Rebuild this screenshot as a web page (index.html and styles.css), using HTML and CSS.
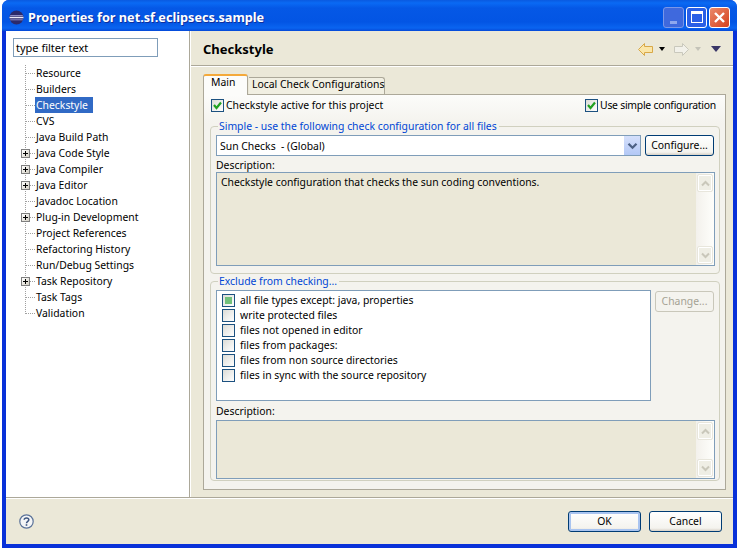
FILE: index.html
```html
<!DOCTYPE html>
<html>
	<head>
		<title>Properties for net.sf.eclipsecs.sample</title>
		<link rel="stylesheet" href="styles.css">
	</head>
	<body>
		<svg class="defs" width="0" height="0">
			<symbol id="check" viewBox="0 0 11 11"><path d="M2 5 L4.5 8 L9 2.5" fill="none" stroke="#21a121" stroke-width="2.2"/></symbol>
			<symbol id="up" viewBox="0 0 9 7"><path d="M1 5.5 L4.5 2 L8 5.5" fill="none" stroke="#c9c7ba" stroke-width="2"/></symbol>
			<symbol id="down" viewBox="0 0 9 7"><path d="M1 1.5 L4.5 5 L8 1.5" fill="none" stroke="#c9c7ba" stroke-width="2"/></symbol>
		</svg>
		<div class="window">
			<div class="titlebar">
				<svg class="app-icon" width="15" height="15" viewBox="0 0 15 15">
					<circle cx="7.5" cy="7.5" r="7" fill="#2c2a6b"/>
					<path d="M1.2 5.5 H13.8" stroke="#8f8dc4" stroke-width="1"/>
					<path d="M0.5 7.5 H14.5" stroke="#eceaf6" stroke-width="1.6"/>
					<path d="M1.2 9.8 H13.8" stroke="#8f8dc4" stroke-width="1"/>
				</svg>
				<span class="title-text">Properties for net.sf.eclipsecs.sample</span>
				<div class="win-btn min"><i></i></div>
				<div class="win-btn max"><i></i></div>
				<div class="win-btn close">
					<svg width="13" height="13" viewBox="0 0 13 13"><path d="M2 2 L11 11 M11 2 L2 11" stroke="#fff" stroke-width="2.4"/></svg>
				</div>
			</div>
			<div class="content">
				<div class="main">
					<div class="sidebar">
						<div class="filter">type filter text</div>
						<div class="tree">
							<div class="row">Resource</div>
							<div class="row">Builders</div>
							<div class="row"><span class="sel">Checkstyle</span></div>
							<div class="row">CVS</div>
							<div class="row">Java Build Path</div>
							<div class="row plus"><b></b>Java Code Style</div>
							<div class="row plus"><b></b>Java Compiler</div>
							<div class="row plus"><b></b>Java Editor</div>
							<div class="row">Javadoc Location</div>
							<div class="row plus"><b></b>Plug-in Development</div>
							<div class="row">Project References</div>
							<div class="row">Refactoring History</div>
							<div class="row">Run/Debug Settings</div>
							<div class="row plus"><b></b>Task Repository</div>
							<div class="row">Task Tags</div>
							<div class="row last">Validation</div>
						</div>
					</div>
					<div class="panel">
						<div class="panel-head">
							<h1>Checkstyle</h1>
							<div class="nav">
								<svg class="nav-arrow" width="15" height="13" viewBox="0 0 15 13"><path d="M0.5 6.5 L6.5 0.5 V3.5 H14.5 V9.5 H6.5 V12.5 Z" fill="#fbe6a8" stroke="#d8a848"/></svg>
								<i class="tri black"></i>
								<svg class="nav-arrow fwd" width="15" height="13" viewBox="0 0 15 13"><path d="M14.5 6.5 L8.5 0.5 V3.5 H0.5 V9.5 H8.5 V12.5 Z" fill="#f2f1ea" stroke="#c9c8bc"/></svg>
								<i class="tri grey"></i>
								<i class="tri big"></i>
							</div>
						</div>
						<div class="tabs">
							<div class="tab active">Main</div>
							<div class="tab">Local Check Configurations</div>
						</div>
						<div class="folder">
							<div class="top-row">
								<label class="cb"><span class="box"><svg width="11" height="11"><use href="#check"/></svg></span>Checkstyle active for this project</label>
								<label class="cb tight"><span class="box"><svg width="11" height="11"><use href="#check"/></svg></span>Use simple configuration</label>
							</div>
							<fieldset class="group simple">
								<legend>Simple - use the following check configuration for all files</legend>
								<div class="combo-row">
									<div class="combo">
										<span>Sun Checks &nbsp;- (Global)</span>
										<span class="combo-btn"><svg width="11" height="8" viewBox="0 0 9 7"><path d="M1 1.5 L4.5 5 L8 1.5" fill="none" stroke="#4d6185" stroke-width="2"/></svg></span>
									</div>
									<div class="btn configure">Configure...</div>
								</div>
								<div class="label">Description:</div>
								<div class="desc tall">
									<div class="desc-text">Checkstyle configuration that checks the sun coding conventions.</div>
									<div class="scroll">
										<span class="sb"><svg width="9" height="7"><use href="#up"/></svg></span>
										<span class="sb"><svg width="9" height="7"><use href="#down"/></svg></span>
									</div>
								</div>
							</fieldset>
							<fieldset class="group exclude">
								<legend>Exclude from checking...</legend>
								<div class="list-row">
									<div class="list">
										<div class="item"><span class="box"><i class="mixed"></i></span>all file types except: java, properties</div>
										<div class="item"><span class="box"></span>write protected files</div>
										<div class="item"><span class="box"></span>files not opened in editor</div>
										<div class="item"><span class="box"></span>files from packages:</div>
										<div class="item"><span class="box"></span>files from non source directories</div>
										<div class="item"><span class="box"></span>files in sync with the source repository</div>
									</div>
									<div class="btn change">Change...</div>
								</div>
								<div class="label lower">Description:</div>
								<div class="desc short">
									<div class="desc-text"></div>
									<div class="scroll">
										<span class="sb"><svg width="9" height="7"><use href="#up"/></svg></span>
										<span class="sb"><svg width="9" height="7"><use href="#down"/></svg></span>
									</div>
								</div>
							</fieldset>
						</div>
					</div>
				</div>
				<div class="footer">
					<svg class="help" width="15" height="15" viewBox="0 0 15 15">
						<circle cx="7.5" cy="7.5" r="6.7" fill="#f4f5f6" stroke="#5a7299" stroke-width="1.2"/>
						<path d="M5.2 5.8 C5.2 3.4 9.8 3.4 9.8 5.8 C9.8 7.4 7.5 7.4 7.5 9.2" fill="none" stroke="#3d5580" stroke-width="1.5"/>
						<rect x="6.7" y="10.2" width="1.6" height="1.6" fill="#3d5580"/>
					</svg>
					<div class="btn ok">OK</div>
					<div class="btn cancel">Cancel</div>
				</div>
			</div>
		</div>
	</body>
</html>
```

FILE: styles.css
```css
html, body {
	margin: 0;
	padding: 0;
	background: #fff;
	overflow: hidden;
}
body {
	width: 738px;
	height: 549px;
	padding-left: 2px;
	box-sizing: border-box;
	font-family: "Noto Sans", sans-serif;
	font-size: 10.4px;
	color: #000;
}
.defs {
	display: block;
	height: 0;
}
.window {
	width: 735px;
	height: 548px;
	background: #0831d9;
	border-radius: 7px 7px 0 0;
	display: flex;
	flex-direction: column;
	overflow: hidden;
}
.titlebar {
	height: 31px;
	flex: none;
	display: flex;
	align-items: center;
	padding: 3px 7px 0 7px;
	box-sizing: border-box;
	background: linear-gradient(#0a5ae0 0, #0a6af4 3px, #0558e6 8px, #0355e4 22px, #0a64f0 28px, #0549d8 31px);
}
.app-icon {
	margin-right: 4px;
}
.title-text {
	color: #fff;
	font-weight: 700;
	font-size: 12.7px;
	flex: 1;
	text-shadow: 1px 1px 0 #0f2f9c;
}
.win-btn {
	width: 21px;
	height: 21px;
	margin-left: 2px;
	border: 1px solid #fff;
	border-radius: 3px;
	box-sizing: border-box;
	display: flex;
	align-items: center;
	justify-content: center;
}
.win-btn.min {
	background: #3f69dd;
	border-color: #7a97e8;
	align-items: flex-end;
}
.win-btn.min i {
	width: 7px;
	height: 3px;
	margin-bottom: 3px;
	background: #8fa8ee;
}
.win-btn.max {
	background: #2a5fe6;
}
.win-btn.max i {
	width: 12px;
	height: 12px;
	border: 1px solid #fff;
	border-top-width: 3px;
	box-sizing: border-box;
}
.win-btn.close {
	background: linear-gradient(135deg, #ea8a6c, #d5401c);
}
.content {
	flex: 1;
	margin: 0 4px 4px;
	background: #ebe8d8;
	display: flex;
	flex-direction: column;
	min-height: 0;
}
.main {
	height: 466px;
	flex: none;
	display: flex;
	border-bottom: 1px solid #aca899;
}
.sidebar {
	width: 176px;
	flex: none;
	background: #fff;
	border-right: 1px solid #aca899;
	padding: 7px 0 0 7px;
}
.filter {
	width: 145px;
	height: 19px;
	line-height: 17px;
	box-sizing: border-box;
	border: 1px solid #7f9db9;
	padding-left: 2px;
	font-size: 11px;
}
.tree {
	margin-top: 8px;
}
.row {
	height: 16px;
	line-height: 16px;
	margin-left: -7px;
	padding-left: 30px;
	background-image:
		repeating-linear-gradient(to bottom, #a0a0a0 0 1px, transparent 1px 2px),
		repeating-linear-gradient(to right, #a0a0a0 0 1px, transparent 1px 2px);
	background-size: 1px 16px, 9px 1px;
	background-position: 19px 0, 20px 8px;
	background-repeat: no-repeat;
	position: relative;
}
.row.last {
	background-size: 1px 9px, 9px 1px;
}
.row b {
	position: absolute;
	left: 15px;
	top: 4px;
	width: 9px;
	height: 9px;
	box-sizing: border-box;
	border: 1px solid #7f7f7f;
	background:
		linear-gradient(#000, #000) center / 5px 1px no-repeat,
		linear-gradient(#000, #000) center / 1px 5px no-repeat,
		linear-gradient(135deg, #fff, #d4d0c4);
}
.sel {
	display: inline-block;
	background: #316ac5;
	color: #fff;
	padding: 0 5px 0 1px;
	margin-left: -1px;
}
.panel {
	flex: 1;
	min-width: 0;
	border-left: 1px solid #fff;
	padding: 0 7px 0 12px;
	display: flex;
	flex-direction: column;
}
.panel-head {
	height: 32px;
	margin: 0 -7px 0 -12px;
	padding: 2px 12px 0 12px;
	border-bottom: 1px solid #aca899;
	box-shadow: 0 1px 0 #fff;
	display: flex;
	align-items: center;
	justify-content: space-between;
}
h1 {
	margin: 0;
	font-size: 13px;
	font-weight: 700;
}
.nav {
	display: flex;
	align-items: center;
}
.tri {
	width: 0;
	height: 0;
	border-style: solid;
	border-color: transparent;
	border-width: 4px 3px 0 3px;
	margin-left: 6px;
}
.tri.black {
	border-top-color: #000;
}
.tri.grey {
	border-top-color: #c4c3b8;
}
.tri.big {
	border-top-color: #3a3768;
	border-width: 6px 5px 0 5px;
	margin-left: 10px;
}
.fwd {
	margin-left: 9px;
}
.tabs {
	margin-top: 7px;
	height: 21px;
	display: flex;
	align-items: flex-end;
	flex: none;
}
.tab {
	height: 17px;
	line-height: 13px;
	padding: 0 3px;
	margin-left: 1px;
	width: 136px;
	box-sizing: border-box;
	white-space: nowrap;
	background: #f1efe2;
	border: 1px solid #aca899;
	border-bottom: none;
	border-left: none;
	border-radius: 0 3px 0 0;
}
.tab.active {
	height: 21px;
	width: 45px;
	margin-left: 0;
	padding: 0 0 0 7px;
	background: #fcfcfa;
	border: 1px solid #aca899;
	border-top: 2px solid #f4a93a;
	border-bottom: none;
	border-radius: 3px 3px 0 0;
	margin-bottom: -1px;
	z-index: 1;
}
.folder {
	height: 396px;
	border: 1px solid #aca899;
	box-sizing: border-box;
	background: linear-gradient(#fcfcfa 0, #f4f3ee 28px);
	padding: 1px 5px 0 6px;
}
.top-row {
	height: 23px;
	display: flex;
	justify-content: space-between;
	align-items: flex-start;
	padding: 2px 4px 0 1px;
	box-sizing: border-box;
}
.cb {
	display: flex;
	align-items: center;
}
.tight {
	letter-spacing: -0.25px;
}
.box {
	width: 13px;
	height: 13px;
	box-sizing: border-box;
	flex: none;
	border: 1px solid #1c5180;
	background: linear-gradient(135deg, #dcdcd7, #fff);
	display: flex;
	align-items: center;
	justify-content: center;
	margin-right: 2px;
}
.group {
	margin: 0;
	padding: 0 5px;
	border: 1px solid #d0d0bf;
	border-radius: 4px;
	min-width: 0;
}
legend {
	color: #0046d5;
	padding: 0 2px 0 1px;
	margin-left: 2px;
	line-height: 13px;
}
.simple {
	margin-top: 1px;
	height: 152px;
}
.exclude {
	margin-top: 1px;
	height: 204px;
}
.combo-row {
	display: flex;
	justify-content: space-between;
	margin-top: 2px;
}
.combo {
	width: 425px;
	height: 21px;
	box-sizing: border-box;
	border: 1px solid #7f9db9;
	background: #fff;
	display: flex;
	align-items: center;
	justify-content: space-between;
	padding-left: 3px;
}
.combo-btn {
	width: 16px;
	height: 19px;
	background: linear-gradient(#d5e0fb, #b3c8f6);
	display: flex;
	align-items: center;
	justify-content: center;
}
.btn {
	height: 21px;
	line-height: 19px;
	text-align: center;
	box-sizing: border-box;
	border: 1px solid #003c74;
	border-radius: 3px;
	background: linear-gradient(#fff, #f4f3ee 85%, #d6d0c5);
}
.configure {
	width: 69px;
}
.change {
	width: 59px;
	color: #a5a294;
	border-color: #c9c7ba;
	background: #f4f3ee;
	margin-top: 1px;
}
.label {
	margin-top: 2px;
	line-height: 14px;
}
.desc {
	border: 1px solid #7f9db9;
	background: #ebe8d8;
	display: flex;
	width: 499px;
	box-sizing: border-box;
}
.desc.tall {
	height: 94px;
}
.desc.short {
	height: 59px;
}
.desc-text {
	flex: 1;
	padding: 0 4px;
	line-height: 19px;
}
.scroll {
	width: 18px;
	display: flex;
	flex-direction: column;
	justify-content: space-between;
	padding: 1px;
	box-sizing: border-box;
	background: linear-gradient(to right, #f3f1ec, #fefefb);
}
.sb {
	height: 16px;
	border: 1px solid #e8e6dc;
	border-radius: 2px;
	background: #efeee5;
	box-shadow: 0 0 0 1px #fff inset;
	display: flex;
	align-items: center;
	justify-content: center;
}
.list-row {
	display: flex;
	justify-content: space-between;
	margin-top: 2px;
}
.list {
	width: 435px;
	height: 111px;
	box-sizing: border-box;
	border: 1px solid #7f9db9;
	background: #fff;
	padding: 2px 0 0 5px;
}
.item {
	height: 15px;
	line-height: 15px;
	display: flex;
	align-items: center;
}
.item .box {
	margin-right: 5px;
}
.mixed {
	width: 7px;
	height: 7px;
	background: #73c17b;
}
.label.lower {
	margin-top: 3px;
	margin-bottom: 2px;
}
.footer {
	flex: 1;
	display: flex;
	align-items: center;
	padding: 0 11px 0 13px;
	border-top: 1px solid #fff;
}
.help {
	margin-right: auto;
}
.ok, .cancel {
	width: 73px;
	height: 21px;
	margin-left: 8px;
}
.ok {
	box-shadow: inset 0 0 0 2px #a9c4f0;
}
```
